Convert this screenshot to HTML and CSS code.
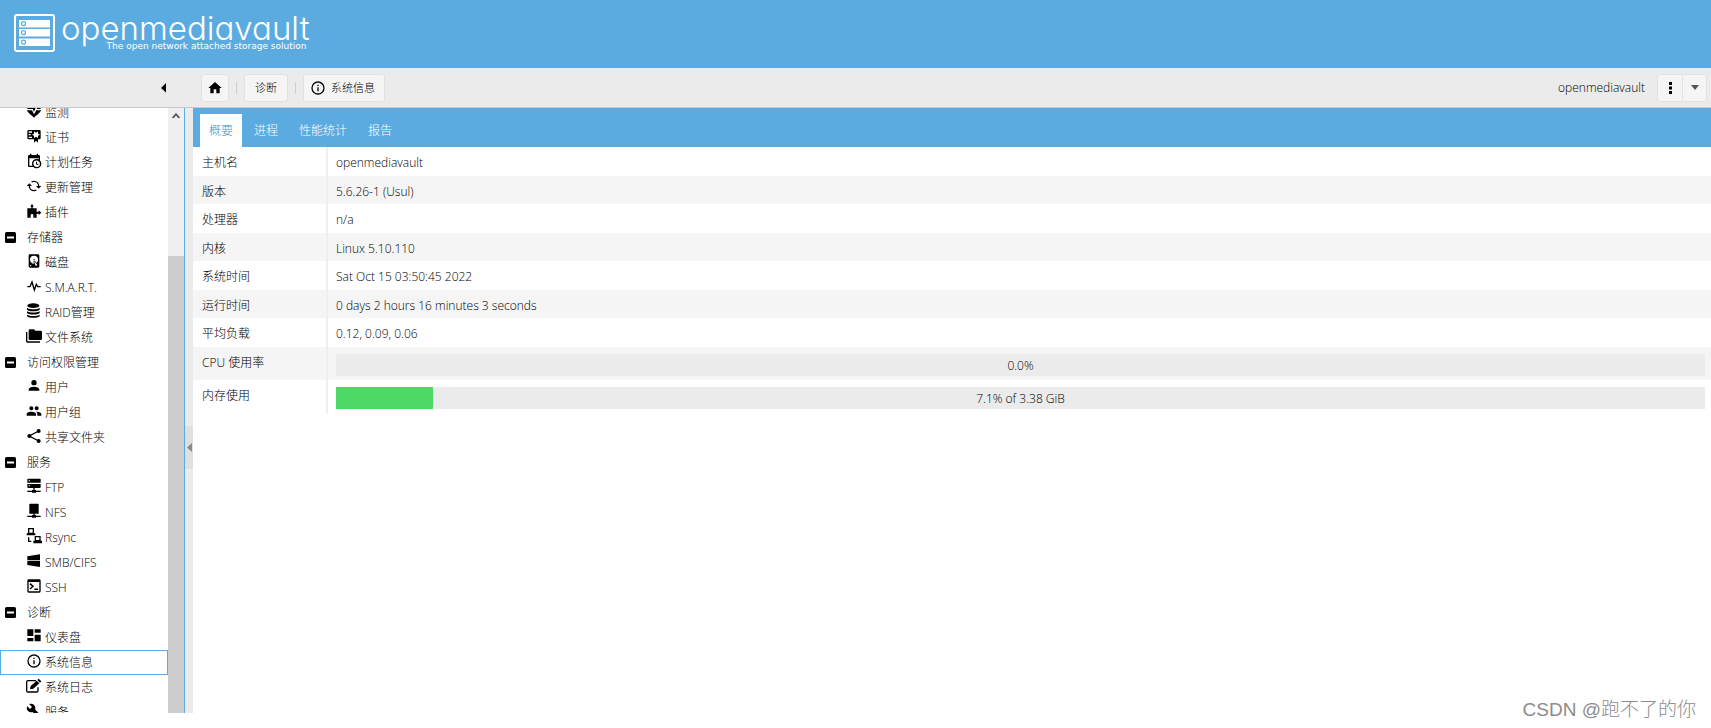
FILE: index.html
```html
<!DOCTYPE html>
<html lang="zh-CN">
<head>
<meta charset="utf-8">
<title>openmediavault</title>
<link rel="stylesheet" href="styles.css">
</head>
<body>
<div class="app">
  <header class="header">
    <svg class="logo-mark" viewBox="0 0 42 39" aria-hidden="true">
      <rect x="1" y="1" width="39" height="36" rx="2" fill="none" stroke="#fff" stroke-width="2"/>
      <g fill="#fff"><rect x="5" y="6" width="31" height="7.500"/><rect x="5" y="15" width="31" height="7.500"/><rect x="5" y="24.500" width="31" height="7.500"/></g>
      <g fill="none" stroke="#5cabe0" stroke-width="1.200"><circle cx="9.500" cy="9.700" r="2"/><circle cx="9.500" cy="18.700" r="2"/><circle cx="9.500" cy="28.200" r="2"/></g>
    </svg>
    <div class="brand">
      <span class="brand-name">openmediavault</span>
      <span class="brand-tag">The open network attached storage solution</span>
    </div>
  </header>

  <div class="toolbar">
    <div class="toolbar-side">
      <button class="collapse" aria-label="Collapse navigation"><svg viewBox="0 0 6 10"><path d="M5 0V9.500L0 5Z"/></svg></button>
    </div>
    <nav class="crumbs">
      <button class="btn btn-home" aria-label="Home"><svg class="icon" viewBox="0 0 24 24"><path d="M10,20V14H14V20H19V12H22L12,3L2,12H5V20H10Z"/></svg></button>
      <span class="sep"></span>
      <button class="btn">诊断</button>
      <span class="sep"></span>
      <button class="btn btn-info"><svg class="icon" viewBox="0 0 24 24"><path d="M11,9H13V7H11M12,20C7.590,20 4,16.410 4,12C4,7.590 7.590,4 12,4C16.410,4 20,7.590 20,12C20,16.410 16.410,20 12,20M12,2A10,10 0 0,0 2,12A10,10 0 0,0 12,22A10,10 0 0,0 22,12A10,10 0 0,0 12,2M11,17H13V11H11V17Z"/></svg>系统信息</button>
    </nav>
    <div class="user">
      <span class="user-name">openmediavault</span>
      <div class="split">
        <button class="btn" aria-label="Menu"><svg viewBox="0 0 3 12" class="dots"><path d="M0 0h3v3H0zM0 4.500h3v3H0zM0 9h3v3H0z"/></svg></button>
        <button class="btn" aria-label="More"><svg viewBox="0 0 8 5" class="caret"><path d="M0 0H8L4 5Z"/></svg></button>
      </div>
    </div>
  </div>

  <div class="body">
    <aside class="sidebar">
      <ul class="tree">
        <li><a href="#" class="leaf"><svg class="icon" viewBox="0 0 24 24"><path d="M2 9C2 5 5 3 8 3C10 3 11 4 12 5C13 4 14 3 16 3C19 3 22 5 22 9H17L15 6L12 13L10 9H2M1 11H9L12 17L16 10L17 11H23C20 16 15 19 12 22C9 19 4 16 1 11Z"/></svg>监测</a></li>
        <li><a href="#" class="leaf"><svg class="icon" viewBox="0 0 24 24"><path d="M4,3C2.890,3 2,3.890 2,5V15A2,2 0 0,0 4,17H12V22L15,19L18,22V17H20A2,2 0 0,0 22,15V8L22,6V5A2,2 0 0,0 20,3H4M12,5L15,7L18,5V8.500L21,10L18,11.500V15L15,13L12,15V11.500L9,10L12,8.500V5M4,5H9V7H4V5M4,9H7V11H4V9M4,13H9V15H4V13Z"/></svg>证书</a></li>
        <li><a href="#" class="leaf"><svg class="icon" viewBox="0 0 24 24"><path d="M15,13H16.500V15.820L18.940,17.230L18.190,18.530L15,16.690V13M19,8H5V19H9.670C9.240,18.090 9,17.070 9,16A7,7 0 0,1 16,9C17.070,9 18.090,9.240 19,9.670V8M5,21C3.890,21 3,20.100 3,19V5C3,3.890 3.890,3 5,3H6V1H8V3H16V1H18V3H19A2,2 0 0,1 21,5V11.100C22.240,12.360 23,14.090 23,16A7,7 0 0,1 16,23C14.090,23 12.360,22.240 11.100,21H5M16,11.150A4.850,4.850 0 0,0 11.150,16C11.150,18.680 13.320,20.850 16,20.850A4.850,4.850 0 0,0 20.850,16C20.850,13.320 18.680,11.150 16,11.150Z"/></svg>计划任务</a></li>
        <li><a href="#" class="leaf"><svg class="icon" viewBox="0 0 24 24"><path d="M19,8L15,12H18A6,6 0 0,1 12,18C11,18 10.030,17.750 9.200,17.300L7.740,18.760C8.970,19.540 10.430,20 12,20A8,8 0 0,0 20,12H23M6,12A6,6 0 0,1 12,6C13,6 13.970,6.250 14.800,6.700L16.260,5.240C15.030,4.460 13.570,4 12,4A8,8 0 0,0 4,12H1L5,16L9,12" transform="matrix(-1 0 0 1 24 0)"/></svg>更新管理</a></li>
        <li><a href="#" class="leaf"><svg class="icon" viewBox="0 0 24 24"><path d="M2 8H8V5.500H6.500L9 1L11.500 5.500H10V8H16V13H19V11L23 14.500L19 18V16H16V22H11V18.500A2 2 0 0 0 7 18.500V22H2Z"/></svg>插件</a></li>

        <li><a href="#" class="group"><svg class="fold" viewBox="0 0 11 11"><rect width="11" height="11" rx="1.500"/><path d="M2 4.500h7v2H2z" fill="#fff"/></svg>存储器</a></li>
        <li><a href="#" class="leaf"><svg class="icon" viewBox="0 0 24 24"><path d="M6,2H18A2,2 0 0,1 20,4V20A2,2 0 0,1 18,22H6A2,2 0 0,1 4,20V4A2,2 0 0,1 6,2M12,4A6,6 0 0,0 6,10C6,13.310 8.690,16 12.100,16L11.220,13.770C10.950,13.290 11.110,12.680 11.590,12.400L12.450,11.900C12.930,11.630 13.540,11.790 13.820,12.270L15.740,14.690C17.120,13.590 18,11.900 18,10A6,6 0 0,0 12,4M12,9A1,1 0 0,1 13,10A1,1 0 0,1 12,11A1,1 0 0,1 11,10A1,1 0 0,1 12,9M7,18A1,1 0 0,0 6,19A1,1 0 0,0 7,20A1,1 0 0,0 8,19A1,1 0 0,0 7,18M12.090,13.270L14.580,19.580L17.170,18.080L12.950,12.770L12.090,13.270Z"/></svg>磁盘</a></li>
        <li><a href="#" class="leaf"><svg class="icon" viewBox="0 0 24 24"><path d="M2 13H6L9 6L12.500 18L15.500 9.500L17.500 13H22" fill="none" stroke="#000" stroke-width="2"/></svg>S.M.A.R.T.</a></li>
        <li><a href="#" class="leaf"><svg class="icon" viewBox="0 0 24 24"><ellipse cx="11" cy="4" rx="9" ry="3.500"/><path d="M1.500 7C5 10 17 10 20.500 7V10C17 13 5 13 1.500 10ZM1.500 12.500C5 15 17 15 20.500 12.500V15C17 18 5 18 1.500 15ZM1.500 17.500C5 20 17 20 20.500 17.500V20C17 23 5 23 1.500 20Z"/></svg>RAID管理</a></li>
        <li><a href="#" class="leaf"><svg class="icon" viewBox="0 0 24 24"><path d="M6 2H12L14 4H22A2 2 0 0 1 24 6V16A2 2 0 0 1 22 18H6A2 2 0 0 1 4 16V4A2 2 0 0 1 6 2ZM0 6H2V19A1 1 0 0 0 3 20H21V22H2A2 2 0 0 1 0 20Z"/></svg>文件系统</a></li>

        <li><a href="#" class="group"><svg class="fold" viewBox="0 0 11 11"><rect width="11" height="11" rx="1.500"/><path d="M2 4.500h7v2H2z" fill="#fff"/></svg>访问权限管理</a></li>
        <li><a href="#" class="leaf"><svg class="icon" viewBox="0 0 24 24"><path d="M12,3A4,4 0 0,1 16,7A4,4 0 0,1 12,11A4,4 0 0,1 8,7A4,4 0 0,1 12,3M12,13C16.420,13 20,14.790 20,17V19H4V17C4,14.790 7.580,13 12,13Z"/></svg>用户</a></li>
        <li><a href="#" class="leaf"><svg class="icon" viewBox="0 0 24 24"><path d="M16,13C15.710,13 15.380,13 15.030,13.050C16.190,13.890 17,15 17,16.500V19H23V16.500C23,14.170 18.330,13 16,13M8,13C5.670,13 1,14.170 1,16.500V19H15V16.500C15,14.170 10.330,13 8,13M8,11A3,3 0 0,0 11,8A3,3 0 0,0 8,5A3,3 0 0,0 5,8A3,3 0 0,0 8,11M16,11A3,3 0 0,0 19,8A3,3 0 0,0 16,5A3,3 0 0,0 13,8A3,3 0 0,0 16,11Z"/></svg>用户组</a></li>
        <li><a href="#" class="leaf"><svg class="icon" viewBox="0 0 24 24"><path d="M19 4.500L5 12L19 19.500" fill="none" stroke="#000" stroke-width="2"/><circle cx="19" cy="4.500" r="3"/><circle cx="5" cy="12" r="3"/><circle cx="19" cy="19.500" r="3"/></svg>共享文件夹</a></li>

        <li><a href="#" class="group"><svg class="fold" viewBox="0 0 11 11"><rect width="11" height="11" rx="1.500"/><path d="M2 4.500h7v2H2z" fill="#fff"/></svg>服务</a></li>
        <li><a href="#" class="leaf"><svg class="icon" viewBox="0 0 24 24"><path d="M3 1H21L22 2V7H2V2ZM2 9H22V14L21 15H13V18H15V19H22V21H15V22H9V21H2V19H9V18H11V15H3L2 14Z"/><path d="M4 3.500h2v1.500H4zM4 11h2v1.500H4z" fill="#fff"/></svg>FTP</a></li>
        <li><a href="#" class="leaf"><svg class="icon" viewBox="0 0 24 24"><path d="M6 1H18L19 2V16H13V18H15V19H22V21H15V22H9V21H2V19H9V18H11V16H5V2Z"/></svg>NFS</a></li>
        <li><a href="#" class="leaf"><svg class="icon" viewBox="0 0 24 24"><g fill="none" stroke="#000" stroke-width="2"><path d="M4 1H11V8H4ZM14 13H21V19H14ZM4 14V20H8"/></g><path d="M1 8H14V11H1ZM11 19H24V23H11Z"/></svg>Rsync</a></li>
        <li><a href="#" class="leaf"><svg class="icon" viewBox="0 0 24 24"><path d="M2 5L21 2V11H2ZM2 12H21V21L2 18Z"/></svg>SMB/CIFS</a></li>
        <li><a href="#" class="leaf"><svg class="icon" viewBox="0 0 24 24"><path d="M4 2H20A2 2 0 0 1 22 4V20A2 2 0 0 1 20 22H4A2 2 0 0 1 2 20V4A2 2 0 0 1 4 2ZM4 6V20H20V6Z" fill-rule="evenodd"/><path d="M6 8.500L10.500 12.500L6 16.500M12.500 17H18" fill="none" stroke="#000" stroke-width="2.200"/></svg>SSH</a></li>

        <li><a href="#" class="group"><svg class="fold" viewBox="0 0 11 11"><rect width="11" height="11" rx="1.500"/><path d="M2 4.500h7v2H2z" fill="#fff"/></svg>诊断</a></li>
        <li><a href="#" class="leaf"><svg class="icon" viewBox="0 0 24 24"><path d="M2 2H11V12H2ZM13 2H22V7H13ZM13 10H22V20H13ZM2 15H11V20H2Z"/></svg>仪表盘</a></li>
        <li><a href="#" class="leaf selected"><svg class="icon" viewBox="0 0 24 24"><path d="M11,9H13V7H11M12,20C7.590,20 4,16.410 4,12C4,7.590 7.590,4 12,4C16.410,4 20,7.590 20,12C20,16.410 16.410,20 12,20M12,2A10,10 0 0,0 2,12A10,10 0 0,0 12,22A10,10 0 0,0 22,12A10,10 0 0,0 12,2M11,17H13V11H11V17Z"/></svg>系统信息</a></li>
        <li><a href="#" class="leaf"><svg class="icon" viewBox="0 0 24 24"><path d="M15 4H3A2 2 0 0 0 1 6V19A2 2 0 0 0 3 21H16A2 2 0 0 0 18 19V14" fill="none" stroke="#000" stroke-width="2"/><path d="M6 17L7 12L16 4L20 8L11 16ZM17 3L19 1L23 5L21 7Z"/></svg>系统日志</a></li>
        <li><a href="#" class="leaf"><svg class="icon" viewBox="0 0 24 24"><path d="M22.700,19L13.600,9.900C14.500,7.600 14,4.900 12.100,3C10.100,1 7.100,0.600 4.700,1.700L9,6L6,9L1.600,4.700C0.400,7.100 0.900,10.100 2.900,12.100C4.800,14 7.500,14.500 9.800,13.600L18.900,22.700C19.300,23.100 19.900,23.100 20.300,22.700L22.600,20.400C23.100,20 23.100,19.300 22.700,19Z" transform="matrix(-1 0 0 1 24 0) rotate(90 12 12)"/></svg>服务</a></li>
      </ul>
      <div class="scrollbar" aria-hidden="true">
        <div class="scroll-track"><svg viewBox="0 0 8 6"><path d="M0.700 5L4 1.200L7.300 5" fill="none" stroke="#555" stroke-width="1.800"/></svg></div>
        <div class="scroll-thumb"></div>
      </div>
    </aside>
    <div class="splitter"><button class="split-handle" aria-label="Collapse panel"><svg viewBox="0 0 5 9"><path d="M5 0V9L0 4.500Z"/></svg></button></div>

    <main class="main">
      <div class="tabs" role="tablist">
        <button class="tab active" role="tab" aria-selected="true">概要</button>
        <button class="tab" role="tab">进程</button>
        <button class="tab" role="tab">性能统计</button>
        <button class="tab" role="tab">报告</button>
      </div>
      <table class="info">
        <tbody>
          <tr><th scope="row">主机名</th><td>openmediavault</td></tr>
          <tr><th scope="row">版本</th><td>5.6.26-1 (Usul)</td></tr>
          <tr><th scope="row">处理器</th><td>n/a</td></tr>
          <tr><th scope="row">内核</th><td>Linux 5.10.110</td></tr>
          <tr><th scope="row">系统时间</th><td>Sat Oct 15 03:50:45 2022</td></tr>
          <tr><th scope="row">运行时间</th><td>0 days 2 hours 16 minutes 3 seconds</td></tr>
          <tr><th scope="row">平均负载</th><td>0.12, 0.09, 0.06</td></tr>
          <tr class="meter-row"><th scope="row">CPU 使用率</th><td><div class="meter"><div class="fill" style="width:0%"></div><span class="meter-text">0.0%</span></div></td></tr>
          <tr class="meter-row"><th scope="row">内存使用</th><td><div class="meter"><div class="fill" style="width:7.1%"></div><span class="meter-text">7.1% of 3.38 GiB</span></div></td></tr>
        </tbody>
      </table>
    </main>
  </div>
  <div class="watermark">CSDN @跑不了的你</div>
</div>
</body>
</html>
```

FILE: styles.css
```css
* { box-sizing: border-box; }

body {
  margin: 0;
  background: #fff;
  color: #000;
  font-family: "Open Sans", "Noto Sans CJK SC", sans-serif;
  font-size: 12px;
  font-weight: 300;
  line-height: 16px;
}

button {
  margin: 0;
  padding: 0;
  border: 0;
  background: none;
  color: inherit;
  font: inherit;
}

svg { display: block; flex: none; }

.app {
  display: flex;
  flex-direction: column;
  height: 100vh;
  padding-bottom: 15px;
  overflow: hidden;
}

.header {
  display: flex;
  flex: none;
  gap: 5px;
  height: 68px;
  padding: 14px 14px 0;
  background: #5cabe0;
  color: #fff;
}
.logo-mark { width: 42px; height: 39px; }
.brand { display: flex; flex-direction: column; align-items: flex-end; }
.brand-name {
  font-family: Inter, "Open Sans", sans-serif;
  font-size: 33px;
  font-weight: 300;
  font-feature-settings: "cv11";
  line-height: 28px;
}
.brand-tag {
  padding-right: 3px;
  font-family: "DejaVu Sans", sans-serif;
  font-size: 9px;
  font-weight: 400;
  line-height: 9px;
}

.toolbar {
  display: flex;
  flex: none;
  height: 40px;
  border-bottom: 1px solid #c8c8c8;
  background: #ebebeb;
}
.toolbar-side {
  display: flex;
  align-items: center;
  justify-content: flex-end;
  width: 193px;
  padding-right: 26px;
}
.collapse svg { width: 6px; height: 10px; }
.crumbs { display: flex; flex: 1; align-items: center; gap: 7px; padding-left: 8px; }
.btn {
  display: flex;
  align-items: center;
  justify-content: center;
  gap: 5px;
  height: 28px;
  padding: 0 10px;
  border: 1px solid #e2e2e2;
  border-radius: 3px;
  background: #f5f5f5;
  font-size: 11px;
}
.btn-home { padding: 0 5px; }
.btn-info { padding: 0 9px 0 6px; }
.icon { width: 16px; height: 16px; fill: #000; }
.sep { width: 1px; height: 12px; background: #cfcfcf; }
.user { display: flex; align-items: center; gap: 12px; padding-right: 4px; }
.split { display: flex; }
.split .btn { width: 25px; padding: 0; }
.split .btn:first-child { border-radius: 3px 0 0 3px; border-right: 0; }
.split .btn:last-child { border-radius: 0 3px 3px 0; }
.dots { width: 3px; height: 12px; }
.caret { width: 8px; height: 5px; fill: #555; }

.body { display: flex; flex: 1; min-height: 0; }

.sidebar {
  display: flex;
  flex: none;
  width: 185px;
  border-right: 1px solid #5cabe0;
  overflow: hidden;
}
.tree { flex: 1; margin: -8px 0 0; padding: 0; list-style: none; }
.leaf, .group {
  display: flex;
  align-items: center;
  height: 25px;
  padding-top: 1px;
  border: 1px solid transparent;
  color: #000;
  text-decoration: none;
}
.leaf { gap: 3px; padding-left: 25px; }
.leaf .icon { margin-bottom: 4px; }
.group { gap: 11px; padding-left: 4px; }
.selected { border-color: #5cabe0; }
.fold { width: 11px; height: 11px; margin-bottom: 2px; }
.scrollbar { display: flex; flex-direction: column; width: 16px; background: #cdcdcd; }
.scroll-track { height: 148px; padding: 5px 4px; background: #f0f0f0; }
.scroll-track svg { width: 8px; height: 6px; }

.splitter { display: flex; flex: none; align-items: center; width: 8px; background: #ebebeb; }
.split-handle {
  display: flex;
  align-items: center;
  justify-content: flex-end;
  width: 8px;
  height: 43px;
  margin-top: 74px;
  padding-right: 1px;
  background: #dfdfdf;
}
.split-handle svg { width: 5px; height: 9px; fill: #8a8a8a; }

.main { flex: 1; min-width: 0; }
.tabs {
  display: flex;
  align-items: flex-end;
  gap: 3px;
  height: 39px;
  padding-left: 7px;
  background: #5cabe0;
  color: #fff;
}
.tab { height: 33px; padding: 0 9px; }
.tab.active { background: #fff; color: #3a97d6; }

.info { width: 100%; border-collapse: separate; border-spacing: 0; table-layout: fixed; }
.info tr { height: 29px; }
.info tr:nth-child(even) { height: 28px; background: #f5f5f5; }
.info .meter-row, .info .meter-row:nth-child(even) { height: 33px; }
.info th {
  width: 135px;
  padding: 8px 0 4px 9px;
  border-right: 2px solid #efefef;
  font-weight: 300;
  text-align: left;
  vertical-align: top;
}
.info td { padding: 8px 6px 4px 8px; vertical-align: top; }
.info .meter-row td { padding: 7px 6px 4px 8px; }
.meter {
  position: relative;
  height: 22px;
  background: #ebebeb;
}
.fill { height: 100%; background: #4cd964; }
.meter-text {
  position: absolute;
  inset: 0;
  line-height: 23px;
  text-align: center;
}

.watermark {
  position: absolute;
  right: 15px;
  bottom: 6px;
  color: #8c8c8c;
  font-family: "Liberation Sans", "Noto Sans CJK SC", sans-serif;
  font-size: 19px;
  line-height: 24px;
}
```
